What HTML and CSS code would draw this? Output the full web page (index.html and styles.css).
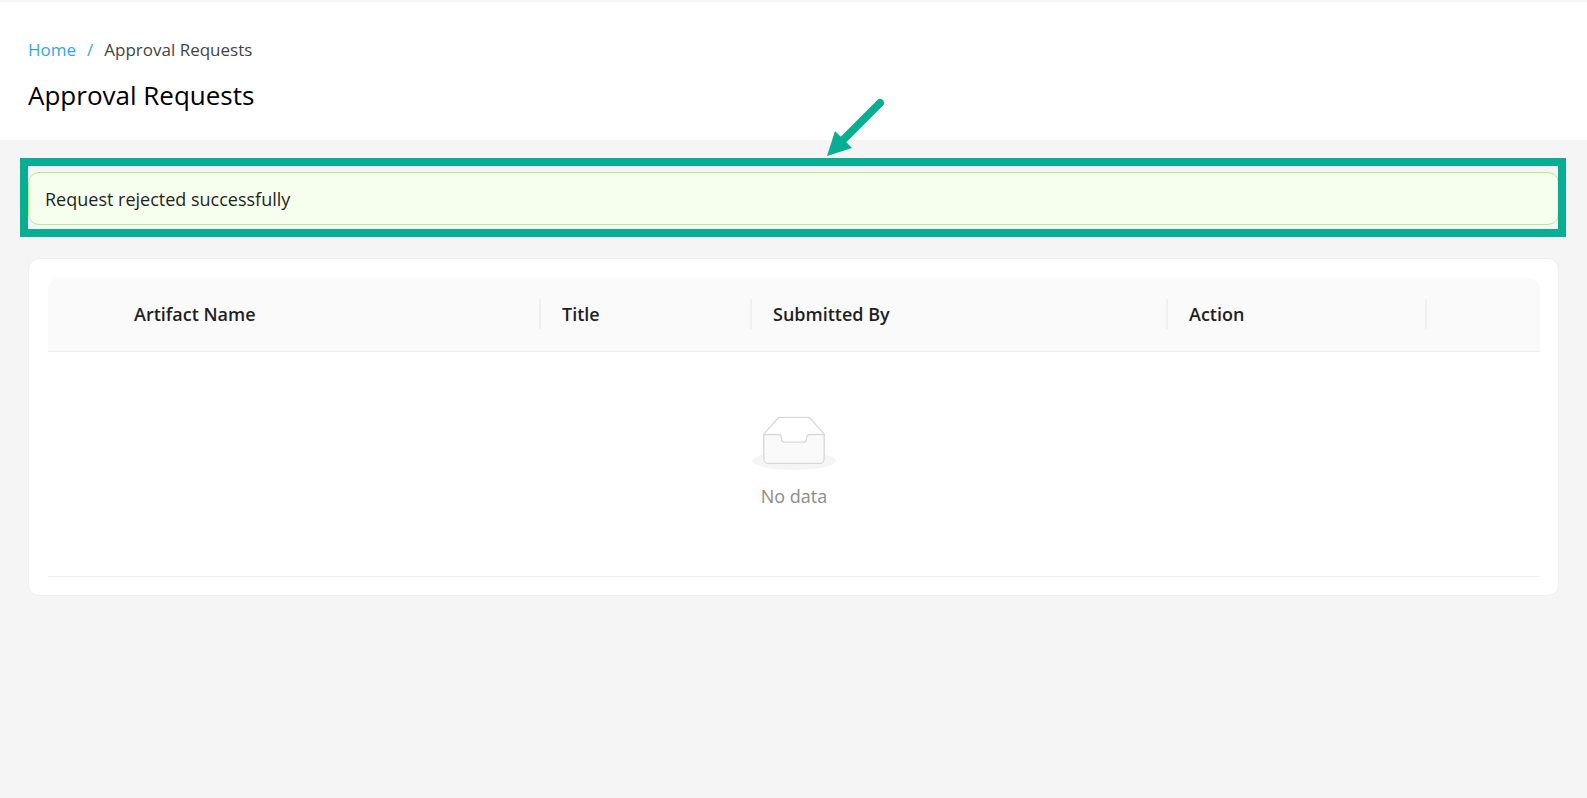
FILE: index.html
```
<!DOCTYPE html>
<html lang="en">
<head>
<meta charset="utf-8">
<title>Approval Requests</title>
<link rel="stylesheet" href="styles.css">
</head>
<body>
<header class="page-header">
  <nav class="breadcrumb" aria-label="Breadcrumb">
    <a href="#">Home</a>
    <span class="separator">/</span>
    <span>Approval Requests</span>
  </nav>
  <h1 class="page-title">Approval Requests</h1>
</header>
<main class="content">
  <div class="alert" role="status">
    Request rejected successfully
    <div class="highlight"></div>
    <svg class="arrow" width="60" height="60" viewBox="0 0 60 60" aria-hidden="true">
      <path d="M54 5L16 43" stroke="#08ae92" stroke-width="8" stroke-linecap="round" fill="none"/>
      <path d="M1 58L9 33L26 50Z" fill="#08ae92"/>
    </svg>
  </div>
  <section class="card">
    <table class="table">
      <colgroup>
        <col class="col-expand"><col class="col-name"><col class="col-title"><col class="col-submitter"><col class="col-action"><col class="col-rest">
      </colgroup>
      <thead>
        <tr>
          <td></td>
          <th scope="col">Artifact Name</th>
          <th scope="col">Title</th>
          <th scope="col">Submitted By</th>
          <th scope="col">Action</th>
          <td></td>
        </tr>
      </thead>
      <tbody>
        <tr>
          <td colspan="6">
            <div class="empty">
              <svg width="84" height="54" viewBox="0 0 64 41" aria-hidden="true">
                <g transform="translate(0 1)" fill="none" fill-rule="evenodd">
                  <ellipse fill="#f5f5f5" cx="32" cy="33" rx="32" ry="7"/>
                  <g stroke="#d9d9d9">
                    <path d="M55 12.76L44.854 1.258C44.367.474 43.656 0 42.907 0H21.093c-.749 0-1.46.474-1.947 1.257L9 12.761V22h46v-9.24z"/>
                    <path d="M41.613 15.931c0-1.605.994-2.93 2.227-2.931H55v18.137C55 33.26 53.68 35 52.05 35h-40.1C10.32 35 9 33.259 9 31.137V13h11.16c1.233 0 2.227 1.323 2.227 2.928v.022c0 1.605 1.005 2.901 2.237 2.901h14.752c1.232 0 2.237-1.308 2.237-2.913v-.007z" fill="#fafafa"/>
                  </g>
                </g>
              </svg>
              <span>No data</span>
            </div>
          </td>
        </tr>
      </tbody>
    </table>
  </section>
</main>
</body>
</html>
```
FILE: styles.css
```
* {
  box-sizing: border-box;
}

body {
  margin: 0;
  background: #f5f5f5;
  color: #1f1f1f;
  font-family: "Segoe UI", "Open Sans", "Noto Sans", sans-serif;
  font-size: 18px;
  line-height: 28px;
}

.page-header {
  border-top: 2px solid #f5f5f5;
  padding: 34px 28px 25px;
  background: #fff;
}

.breadcrumb {
  display: flex;
  gap: 11px;
  font-size: 17px;
  color: #444;
}

.breadcrumb a,
.breadcrumb .separator {
  color: #38a4e8;
  text-decoration: none;
}

.page-title {
  margin: 11px 0 0;
  color: #000;
  font-size: 26px;
  font-weight: 400;
  line-height: 40px;
}

.content {
  display: flex;
  flex-direction: column;
  gap: 33px;
  padding: 32px 28px;
}

.alert {
  position: relative;
  padding: 13px 16px 12px;
  border: 1px solid #b7eb8f;
  border-radius: 11px;
  background: #f6ffed;
  line-height: 26px;
}

.highlight {
  position: absolute;
  inset: -15px -8px -13px -9px;
  border: 8px solid #08ae92;
}

.arrow {
  position: absolute;
  left: calc(52% + 2px);
  bottom: 66px;
}

.card {
  padding: 19px 18px 18px 19px;
  border: 1px solid #f0f0f0;
  border-radius: 11px;
  background: #fff;
}

.table {
  width: 100%;
  table-layout: fixed;
  border-collapse: separate;
  border-spacing: 0;
}

.col-expand { width: 65px; }
.col-title { width: 211px; }
.col-submitter { width: 416px; }
.col-action { width: 259px; }
.col-rest { width: 113px; }

.table th,
.table td {
  padding: 0;
  border-bottom: 1px solid #f0f0f0;
}

.table thead th,
.table thead td {
  padding: 21px 0;
  background: #fafafa;
}

.table th {
  position: relative;
  font-weight: 600;
  line-height: 31px;
  text-align: left;
}

.table thead th {
  padding-left: 21px;
}

.table th::after {
  content: "";
  position: absolute;
  top: 21px;
  right: 0;
  width: 2px;
  height: 30px;
  background: #f0f0f0;
}

.table thead td:first-child { border-top-left-radius: 11px; }
.table thead td:last-child { border-top-right-radius: 11px; }

.empty {
  display: flex;
  flex-direction: column;
  align-items: center;
  gap: 12px;
  padding: 64px 0 66px;
  color: #8c8c8c;
}

.empty svg {
  display: block;
}
```
